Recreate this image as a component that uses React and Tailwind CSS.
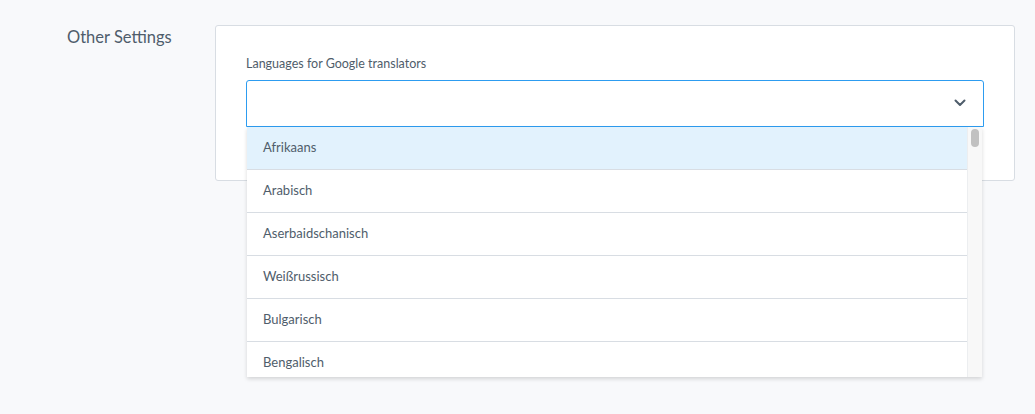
import React from 'react'

const languages = ['Afrikaans', 'Arabisch', 'Aserbaidschanisch', 'Weißrussisch', 'Bulgarisch', 'Bengalisch']

export default function App() {
  return (
    <div className="w-[1035px] h-[414px] bg-[#f8f9fb] overflow-hidden" style={{ fontFamily: 'Lato, "Open Sans", sans-serif' }}>
      <div className="flex pt-[25px]">
        <div className="w-[215px] pl-[67px] text-[16.5px] text-[#4f5d6b]">Other Settings</div>
        <div className="w-[800px] h-[156px] bg-white border border-[#d8dde3] rounded-[3px] px-[30px] pt-[29px]">
          <div className="text-[12.5px] text-[#4f5d6b] mb-[6px]">Languages for Google translators</div>
          <div className="relative w-[738px]">
            <div className="h-[47px] border border-[#2d9cf0] rounded-t-[3px] flex items-center justify-end pr-[17px]">
              <svg width="12" height="8" viewBox="0 0 12 8" fill="none" stroke="#4f5d6b" strokeWidth="2" strokeLinecap="round" strokeLinejoin="round">
                <path d="M1.5 1.5 6 6l4.5-4.5" />
              </svg>
            </div>
            <div className="absolute left-[1px] top-[47px] w-[735px] h-[250px] bg-white shadow-[0_2px_4px_rgba(0,0,0,0.15)] flex overflow-hidden">
              <div className="flex-1">
                {languages.map((l, i) => (
                  <div key={l} className={`h-[43px] flex items-center pl-[16px] text-[13px] text-[#4f5d6b] border-b border-[#d8dde3] ${i === 0 ? 'bg-[#e2f2fd]' : ''}`}>{l}</div>
                ))}
              </div>
              <div className="w-[15px] bg-[#f8f8f8] border-l border-[#eceef0] flex justify-center pt-[2px]">
                <div className="w-[8px] h-[18px] rounded bg-[#c1c1c1]" />
              </div>
            </div>
          </div>
        </div>
      </div>
    </div>
  )
}
